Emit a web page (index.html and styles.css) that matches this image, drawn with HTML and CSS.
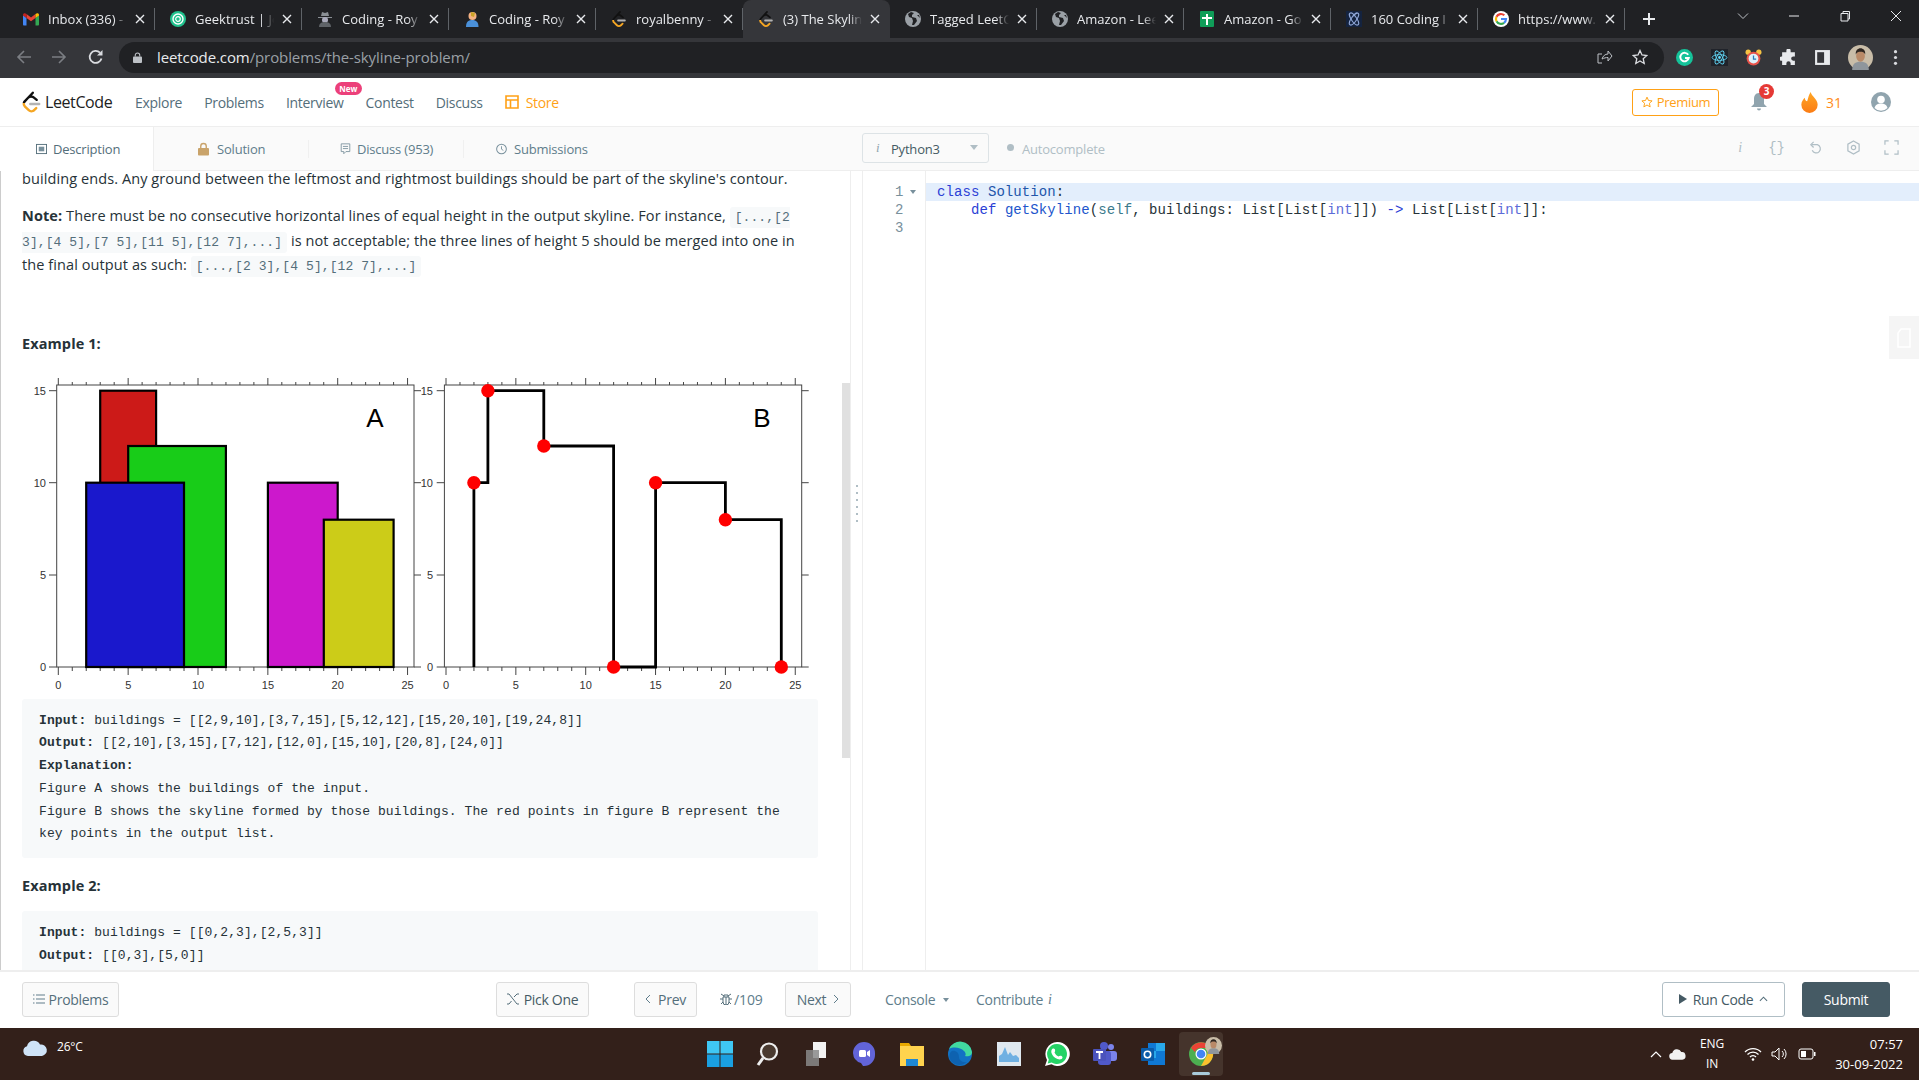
FILE: index.html
```html
<!DOCTYPE html>
<html lang="en">
<head>
  <meta charset="UTF-8">
  <title>The Skyline Problem - LeetCode</title>
  <link rel="stylesheet" href="styles.css">
</head>
<body>
  <svg class="defs">
    <defs>
      <linearGradient id="lcfill" x1="0" y1="0" x2="0" y2="1">
        <stop offset="0.56" stop-color="#111"/>
        <stop offset="0.56" stop-color="#f5a623"/>
      </linearGradient>
      <linearGradient id="flame" x1="0" y1="0" x2="0" y2="1">
        <stop offset="0" stop-color="#ffa726"/>
        <stop offset="1" stop-color="#fb7c14"/>
      </linearGradient>
    </defs>
    <symbol id="lc" viewBox="0 0 24 24">
      <path fill="url(#lcfill)" d="M13.483 0a1.374 1.374 0 0 0-.961.438L7.116 6.226l-3.854 4.126a5.266 5.266 0 0 0-1.209 2.104 5.35 5.35 0 0 0-.125.513 5.527 5.527 0 0 0 .062 2.362 5.83 5.83 0 0 0 .349 1.017 5.938 5.938 0 0 0 1.271 1.818l4.277 4.193.039.038c2.248 2.165 5.852 2.133 8.063-.074l2.396-2.392c.54-.54.54-1.414.003-1.955a1.378 1.378 0 0 0-1.951-.003l-2.396 2.392a3.021 3.021 0 0 1-4.205.038l-.02-.019-4.276-4.193c-.652-.64-.972-1.469-.948-2.263a2.68 2.68 0 0 1 .066-.523 2.545 2.545 0 0 1 .619-1.164L9.13 8.114c1.058-1.134 3.204-1.27 4.43-.278l3.501 2.831c.593.48 1.461.387 1.94-.207a1.384 1.384 0 0 0-.207-1.943l-3.5-2.831c-.8-.647-1.766-1.045-2.774-1.202l2.015-2.158A1.384 1.384 0 0 0 13.483 0z"/>
      <path fill="#b3b3b3" d="M10.617 12.815a1.38 1.38 0 0 0 0 2.764H20.79a1.38 1.38 0 0 0 0-2.764z"/>
    </symbol>
    <symbol id="globe" viewBox="0 0 16 16">
      <circle cx="8" cy="8" r="8" fill="#9aa0a6"/>
      <path fill="#202124" d="M6 1 3 3l1 3 3 1 1 3-1 4h2l3-4-1-3-4-1V4l2-2zM12 4l2 2 1 1-1-3z"/>
    </symbol>
    <symbol id="close" viewBox="0 0 10 10">
      <path d="M1 1l8 8M9 1l-8 8" stroke="#e8eaed" stroke-width="1.4" fill="none"/>
    </symbol>
  </svg>

  <div class="tabstrip">
    <div class="tab">
      <svg class="fav" viewBox="0 0 16 16"><path fill="#4285f4" d="M0 4v9.5c0 .5.4 1 1 1h2.500V7z"/><path fill="#34a853" d="M16 4v9.500c0 .5-.4 1-1 1h-2.500V7z"/><path fill="#ea4335" d="M3.500 7 8 10.300 12.500 7V3L8 6.400 3.500 3z"/><path fill="#c5221f" d="M0 4c0-2 2-2.500 3.500-1v4L0 4.500z"/><path fill="#fbbc04" d="M16 4c0-2-2-2.500-3.500-1v4L16 4.500z"/></svg>
      <span class="tab-title">Inbox (336) - </span><svg class="x"><use href="#close"/></svg>
    </div>
    <div class="tab">
      <svg class="fav" viewBox="0 0 16 16"><circle cx="8" cy="8" r="8" fill="#1fc08c"/><circle cx="8" cy="8" r="5" fill="none" stroke="#fff" stroke-width="1.400"/><circle cx="8" cy="8" r="2.300" fill="none" stroke="#fff" stroke-width="1.200"/></svg>
      <span class="tab-title">Geektrust | Jo</span><svg class="x"><use href="#close"/></svg>
    </div>
    <div class="tab">
      <svg class="fav" viewBox="0 0 16 16"><path fill="#8a8f94" d="M4 5l1-4 3 1 3-1 1 4zM1 6h14v1H1z"/><circle cx="8" cy="9" r="3" fill="#aab"/><path fill="#5f6368" d="M2 16c0-4 3-5 6-5s6 1 6 5z"/></svg>
      <span class="tab-title">Coding - Roy</span><svg class="x"><use href="#close"/></svg>
    </div>
    <div class="tab">
      <svg class="fav" viewBox="0 0 16 16"><circle cx="8.500" cy="5" r="4" fill="#f4b183"/><path fill="#4a90d9" d="M2 16c0-6 3-7 6.500-7s6 2 6 7z"/><path fill="#c9a227" d="M7 1l4 1-1 4-3-1z"/></svg>
      <span class="tab-title">Coding - Roy</span><svg class="x"><use href="#close"/></svg>
    </div>
    <div class="tab">
      <svg class="fav"><use href="#lc"/></svg>
      <span class="tab-title">royalbenny - </span><svg class="x"><use href="#close"/></svg>
    </div>
    <div class="tab active">
      <svg class="fav"><use href="#lc"/></svg>
      <span class="tab-title">(3) The Skylin</span><svg class="x"><use href="#close"/></svg>
    </div>
    <div class="tab">
      <svg class="fav"><use href="#globe"/></svg>
      <span class="tab-title">Tagged LeetC</span><svg class="x"><use href="#close"/></svg>
    </div>
    <div class="tab">
      <svg class="fav"><use href="#globe"/></svg>
      <span class="tab-title">Amazon - Lee</span><svg class="x"><use href="#close"/></svg>
    </div>
    <div class="tab">
      <svg class="fav" viewBox="0 0 16 16"><rect x="1" width="14" height="16" rx="1" fill="#0f9d58"/><path fill="#fff" d="M7 3h2v3h4v2H9v6H7V8H3V6h4z"/></svg>
      <span class="tab-title">Amazon - Go</span><svg class="x"><use href="#close"/></svg>
    </div>
    <div class="tab">
      <svg class="fav" viewBox="0 0 16 16"><rect width="16" height="16" fill="#14233f"/><g fill="none" stroke="#8fa6d6" stroke-width="1.200"><ellipse cx="8" cy="8" rx="2.600" ry="7" transform="rotate(35 8 8)"/><ellipse cx="8" cy="8" rx="2.600" ry="7" transform="rotate(-35 8 8)"/></g></svg>
      <span class="tab-title">160 Coding I</span><svg class="x"><use href="#close"/></svg>
    </div>
    <div class="tab">
      <svg class="fav" viewBox="0 0 16 16"><circle cx="8" cy="8" r="8" fill="#fff"/><path fill="none" stroke="#4285f4" stroke-width="2.200" d="M8 8h5a5 5 0 0 1-2 3.800"/><path fill="none" stroke="#34a853" stroke-width="2.200" d="M11 11.800A5 5 0 0 1 3.500 10.300"/><path fill="none" stroke="#fbbc04" stroke-width="2.200" d="M3.500 10.300a5 5 0 0 1 0-4.600"/><path fill="none" stroke="#ea4335" stroke-width="2.200" d="M3.500 5.700A5 5 0 0 1 11.300 4.300"/></svg>
      <span class="tab-title">https://www.</span><svg class="x"><use href="#close"/></svg>
    </div>
    <svg class="newtab" viewBox="0 0 14 14"><path d="M7 1v12M1 7h12" stroke="#e8eaed" stroke-width="2" fill="none"/></svg>
    <div class="win-btns">
      <svg viewBox="0 0 12 12"><path d="M1 3.500l5 5 5-5" stroke="#bdc1c6" fill="none"/></svg>
      <svg viewBox="0 0 12 12"><path d="M1 6h10" stroke="#e8eaed" fill="none"/></svg>
      <svg viewBox="0 0 12 12"><path d="M2 3.500h7v7.500H2zM4 3.500V1.500h6.500V9H9" stroke="#e8eaed" fill="none"/></svg>
      <svg viewBox="0 0 12 12"><path d="M1 1l10 10M11 1L1 11" stroke="#e8eaed" fill="none"/></svg>
    </div>
  </div>

  <div class="toolbar">
    <svg class="nav-ico" viewBox="0 0 16 16"><path d="M15 8H2M8 2 2 8l6 6" stroke="#7b7e83" stroke-width="1.600" fill="none"/></svg>
    <svg class="nav-ico forward" viewBox="0 0 16 16"><path d="M1 8h13M8 2l6 6-6 6" stroke="#7b7e83" stroke-width="1.600" fill="none"/></svg>
    <svg class="nav-ico reload" viewBox="0 0 16 16"><path d="M13.500 9.500A6 6 0 1 1 12 3.700" stroke="#dadce0" stroke-width="1.800" fill="none"/><path d="M14.500 1v5.500H9z" fill="#dadce0"/></svg>
    <div class="omnibox">
      <svg class="lock" viewBox="0 0 10 12"><path d="M2.500 5V3.500a2.500 2.500 0 0 1 5 0V5" stroke="#bdc1c6" stroke-width="1.200" fill="none"/><rect y="5" width="10" height="7" rx="1" fill="#bdc1c6"/></svg>
      <span class="url">leetcode.com<span class="url-path">/problems/the-skyline-problem/</span></span>
      <svg class="omni-ico share" viewBox="0 0 16 16"><path d="M5 14H1V5h4M5 10c1-3 3-5 6-5V2l4 5-4 5V8.500c-2 0-4 .5-6 1.500z" stroke="#bdc1c6" fill="none"/></svg>
      <svg class="omni-ico" viewBox="0 0 16 16"><path d="M8 1.500l2 4.500 4.800.5-3.600 3.200 1 4.800L8 12l-4.200 2.500 1-4.800L1.200 6.500 6 6z" stroke="#dadce0" stroke-width="1.300" fill="none"/></svg>
    </div>
    <div class="ext-row">
      <svg viewBox="0 0 16 16"><circle cx="8" cy="8" r="8" fill="#15c39a"/><path d="M11.500 5.500a4 4 0 1 0 .5 3H8.500" stroke="#fff" stroke-width="1.800" fill="none"/></svg>
      <svg viewBox="0 0 16 16"><rect width="16" height="16" fill="#20232a"/><g fill="none" stroke="#61dafb" stroke-width=".8"><ellipse cx="8" cy="8" rx="7" ry="2.700"/><ellipse cx="8" cy="8" rx="7" ry="2.700" transform="rotate(60 8 8)"/><ellipse cx="8" cy="8" rx="7" ry="2.700" transform="rotate(120 8 8)"/></g><circle cx="8" cy="8" r="1.300" fill="#61dafb"/></svg>
      <svg viewBox="0 0 16 16"><circle cx="3" cy="3" r="2.500" fill="#f6c343"/><circle cx="13" cy="3" r="2.500" fill="#f6c343"/><circle cx="8" cy="9" r="6.500" fill="#e8534a"/><circle cx="8" cy="9" r="4.600" fill="#dff3fb"/><path d="M8 6v3.500h2.500" stroke="#2a78b8" stroke-width="1.200" fill="none"/></svg>
      <svg viewBox="0 0 16 16"><path fill="#e8eaed" d="M6 1.500a2 2 0 0 1 4 0V3h4v4h-1.500a2 2 0 0 0 0 4H14v4H10v-1.500a2 2 0 0 0-4 0V15H2v-4h-.5a2 2 0 0 1 0-4H2V3h4z"/></svg>
      <svg viewBox="0 0 16 16"><rect x="1" y="1" width="14" height="14" fill="#e8eaed"/><rect x="3" y="3" width="6.500" height="10" fill="#35363a"/></svg>
      <svg class="profile" viewBox="0 0 24 24"><circle cx="12" cy="12" r="12" fill="#c9bda8"/><path fill="#8f969c" d="M4 24c0-6 3-8 8-8s8 2 8 8z"/><ellipse cx="12" cy="10.500" rx="4.200" ry="5.500" fill="#b98a68"/><path fill="#2e2620" d="M7.500 9c-.5-4 2-6 4.500-6s5 2 4.500 6c-1-2-2.500-2.500-4.500-2.500S8.500 7 7.500 9z"/></svg>
      <svg class="menu-dots" viewBox="0 0 16 16"><circle cx="8" cy="2.500" r="1.500" fill="#dadce0"/><circle cx="8" cy="8" r="1.500" fill="#dadce0"/><circle cx="8" cy="13.500" r="1.500" fill="#dadce0"/></svg>
    </div>
  </div>

  <header class="lc-header">
    <div class="brand">
      <svg class="brand-logo"><use href="#lc"/></svg>
      <span class="brand-name">LeetCode</span>
    </div>
    <nav class="main-nav">
      <a>Explore</a>
      <a>Problems</a>
      <a class="has-new">Interview<span class="new-badge">New</span></a>
      <a>Contest</a>
      <a>Discuss</a>
      <a class="store">
        <svg viewBox="0 0 14 14"><path d="M1 1h12v12H1zM1 5h12M5.500 5v8" stroke="#ffa116" stroke-width="1.600" fill="none"/></svg>Store
      </a>
    </nav>
    <div class="header-right">
      <span class="premium"><svg viewBox="0 0 16 16"><path d="M8 1.500l2 4.500 4.800.5-3.600 3.200 1 4.800L8 12l-4.200 2.500 1-4.800L1.200 6.500 6 6z" stroke="#ffa116" stroke-width="1.300" fill="none"/></svg>Premium</span>
      <span class="bell">
        <svg viewBox="0 0 18 20"><path fill="#90a4ae" d="M9 1c-3.500 0-5 3-5 6v5l-3 3h16l-3-3V7c0-3-1.500-6-5-6zM7 16.500a2 2 0 0 0 4 0z"/></svg>
        <span class="bell-count">3</span>
      </span>
      <span class="streak"><svg viewBox="0 0 14 18"><path fill="url(#flame)" d="M8 0c1 4 6 6 6 11a7 7 0 0 1-14 0c0-3 2-5 3-6 0 2 1 3 2 3 1-3 1-5 3-8z"/></svg>31</span>
      <svg class="avatar" viewBox="0 0 20 20"><circle cx="10" cy="10" r="10" fill="#90a4ae"/><circle cx="10" cy="7.500" r="3.800" fill="#fff"/><path fill="#fff" d="M3.500 16c1-3.500 3.500-4.500 6.500-4.500s5.500 1 6.500 4.500a9 9 0 0 1-13 0z"/></svg>
    </div>
  </header>

  <div class="tabs-bar">
    <div class="left-tabs">
      <a class="side-tab current"><svg viewBox="0 0 12 12"><rect x=".5" y="1" width="11" height="10" fill="none" stroke="#546e7a"/><rect x="3" y="3.500" width="6" height="5" fill="#78909c"/></svg>Description</a>
      <a class="side-tab solution"><svg class="lock-ico" viewBox="0 0 12 14"><path d="M3 6V4a3 3 0 0 1 6 0v2" stroke="#c9a36a" stroke-width="1.500" fill="none"/><rect y="6" width="12" height="8" rx="1" fill="#c9a36a"/></svg>Solution</a>
      <a class="side-tab discuss"><svg viewBox="0 0 12 14"><path d="M1 1h10v9H6.500L4 12.500V10H1zM3 4h6M3 6.500h6" stroke="#78909c" fill="none"/></svg>Discuss (953)</a>
      <a class="side-tab submissions"><svg viewBox="0 0 12 12"><circle cx="6" cy="6" r="5.300" fill="none" stroke="#78909c" stroke-width="1.100"/><path d="M6 3v3.200l2 1.300" fill="none" stroke="#78909c"/></svg>Submissions</a>
    </div>
    <div class="editor-bar">
      <div class="lang-select"><span class="lang-i">i</span><span class="lang-name">Python3</span><span class="caret"></span></div>
      <span class="auto-dot"></span><span class="auto-label">Autocomplete</span>
      <div class="editor-tools">
        <span class="tool-i">i</span>
        <span class="tool-braces">{}</span>
        <svg viewBox="0 0 16 16"><path d="M4 5h6a4.500 4.500 0 1 1-5.500 6" stroke="#b0bec5" stroke-width="1.300" fill="none"/><path d="M6 2 3 5l3 3" stroke="#b0bec5" stroke-width="1.300" fill="none"/></svg>
        <svg viewBox="0 0 16 16"><path d="M8 1l6 3.500v7L8 15l-6-3.500v-7z" stroke="#b0bec5" stroke-width="1.300" fill="none"/><circle cx="8" cy="8" r="2.300" stroke="#b0bec5" stroke-width="1.300" fill="none"/></svg>
        <svg viewBox="0 0 16 16"><path d="M1 5V1h4M11 1h4v4M15 11v4h-4M5 15H1v-4" stroke="#b0bec5" stroke-width="1.300" fill="none"/></svg>
      </div>
    </div>
  </div>

  <main class="workspace">
    <section class="left-pane">
      <div class="desc">
        <p class="para lead">building ends. Any ground between the leftmost and rightmost buildings should be part of the skyline's contour.</p>
        <p class="para note"><strong>Note:</strong> There must be no consecutive horizontal lines of equal height in the output skyline. For instance, <code>[...,[2 3],[4 5],[7 5],[11 5],[12 7],...]</code> is not acceptable; the three lines of height 5 should be merged into one in the final output as such: <code>[...,[2 3],[4 5],[12 7],...]</code></p>
        <p class="para example-title first"><strong>Example 1:</strong></p>
        <svg class="figure" viewBox="22 370 800 329" width="800" height="329">
          <defs>
            <g id="axes" fill="none" stroke="#444">
              <rect x="56.700" y="385" width="357.300" height="282"/>
              <path d="M58.300 667v8m13.970-8v4m13.970-4v4m13.970-4v4m13.970-4v4m13.970-4v8m13.970-8v4m13.970-4v4m13.970-4v4m13.970-4v4m13.970-4v8m13.970-8v4m13.970-4v4m13.970-4v4m13.970-4v4m13.970-4v8m13.970-8v4m13.970-4v4m13.970-4v4m13.970-4v4m13.970-4v8m13.970-8v4m13.970-4v4m13.970-4v4m13.970-4v4m13.970-4v8"/>
              <path d="M58.300 385v-7m13.970 7v-3m13.970 3v-3m13.970 3v-3m13.970 3v-3m13.970 3v-7m13.970 7v-3m13.970 3v-3m13.970 3v-3m13.970 3v-3m13.970 3v-7m13.970 7v-3m13.970 3v-3m13.970 3v-3m13.970 3v-3m13.970 3v-7m13.970 7v-3m13.970 3v-3m13.970 3v-3m13.970 3v-3m13.970 3v-7m13.970 7v-3m13.970 3v-3m13.970 3v-3m13.970 3v-3m13.970 3v-7"/>
              <path d="M49 390.700h7.700M49 482.700h7.700M49 575h7.700M49 667h7.700M414 390.700h7M414 482.700h7M414 575h7M414 667h7"/>
            </g>
          </defs>
          <use href="#axes"/>
          <use href="#axes" x="387.700"/>
          <g class="tick-text x-ticks">
            <text x="58.300" y="689">0</text><text x="128.200" y="689">5</text><text x="198" y="689">10</text><text x="267.900" y="689">15</text><text x="337.700" y="689">20</text><text x="407.600" y="689">25</text>
            <text x="446" y="689">0</text><text x="515.900" y="689">5</text><text x="585.700" y="689">10</text><text x="655.600" y="689">15</text><text x="725.400" y="689">20</text><text x="795.300" y="689">25</text>
          </g>
          <g class="tick-text y-ticks">
            <text x="46" y="394.700">15</text><text x="46" y="486.700">10</text><text x="46" y="579">5</text><text x="46" y="671">0</text>
            <text x="433" y="394.700">15</text><text x="433" y="486.700">10</text><text x="433" y="579">5</text><text x="433" y="671">0</text>
          </g>
          <g stroke="#000" stroke-width="2.200">
            <rect x="100.200" y="390.700" width="55.900" height="276.300" fill="#cc1a18"/>
            <rect x="128.200" y="446" width="97.700" height="221" fill="#18cc18"/>
            <rect x="86.200" y="482.700" width="97.800" height="184.300" fill="#1a18cc"/>
            <rect x="267.900" y="482.700" width="69.800" height="184.300" fill="#cc18cc"/>
            <rect x="323.800" y="519.700" width="69.800" height="147.300" fill="#cccc18"/>
          </g>
          <path d="M473.900 667V482.700H487.900V390.700H543.800V446H613.600V667H655.600V482.700H725.400V519.700H781.300V667" fill="none" stroke="#000" stroke-width="2.800"/>
          <g fill="#f00">
            <circle cx="473.900" cy="482.700" r="6.700"/><circle cx="487.900" cy="390.700" r="6.700"/><circle cx="543.800" cy="446" r="6.700"/><circle cx="613.600" cy="667" r="6.700"/><circle cx="655.600" cy="482.700" r="6.700"/><circle cx="725.400" cy="519.700" r="6.700"/><circle cx="781.300" cy="667" r="6.700"/>
          </g>
          <text class="panel-letter" x="375" y="427">A</text>
          <text class="panel-letter" x="762" y="427">B</text>
        </svg>
        <pre class="sample"><strong>Input:</strong> buildings = [[2,9,10],[3,7,15],[5,12,12],[15,20,10],[19,24,8]]
<strong>Output:</strong> [[2,10],[3,15],[7,12],[12,0],[15,10],[20,8],[24,0]]
<strong>Explanation:</strong>
Figure A shows the buildings of the input.
Figure B shows the skyline formed by those buildings. The red points in figure B represent the
key points in the output list.</pre>
        <p class="para example-title"><strong>Example 2:</strong></p>
        <pre class="sample"><strong>Input:</strong> buildings = [[0,2,3],[2,5,3]]
<strong>Output:</strong> [[0,3],[5,0]]</pre>
      </div>
      <div class="scrollbar"></div>
    </section>
    <div class="splitter"><span></span><span></span><span></span><span></span><span></span><span></span></div>
    <section class="editor">
      <div class="gutter">
        <div class="ln">1<span class="fold"></span></div>
        <div class="ln">2</div>
        <div class="ln">3</div>
      </div>
      <div class="code">
        <div class="code-line current-line"><span class="kw">class</span> <span class="cls">Solution</span>:</div>
        <div class="code-line">    <span class="kw">def</span> <span class="fn">getSkyline</span>(<span class="self">self</span>, buildings: List[List[<span class="bi">int</span>]]) <span class="kw">-&gt;</span> List[List[<span class="bi">int</span>]]:</div>
        <div class="code-line"></div>
      </div>
      <div class="side-handle"><svg viewBox="0 0 14 20"><path d="M4 1h9v18H1V5z" fill="none" stroke="#fff" stroke-width="1.500"/></svg></div>
    </section>
  </main>

  <footer class="action-bar">
    <button class="btn problems"><svg viewBox="0 0 12 12"><path d="M3 2h9M3 6h9M3 10h9M0 2h1.500M0 6h1.500M0 10h1.500" stroke="#607d8b" fill="none"/></svg>Problems</button>
    <button class="btn pick"><svg viewBox="0 0 12 12"><path d="M0 1h2l8 10h2M0 11h2l2.500-3M7 4l3-3h2" stroke="#546e7a" fill="none"/></svg>Pick One</button>
    <button class="btn prev"><svg viewBox="0 0 6 10"><path d="M5 1 1 5l4 4" stroke="#607d8b" fill="none"/></svg>Prev</button>
    <span class="pager"><svg viewBox="0 0 12 12"><path d="M3 4h6v5a3 3 0 0 1-6 0zM4 4V2h4v2M0 6h3M9 6h3M1 11l2-2M11 11 9 9M1 1l3 2M11 1 8 3M6 4v8" stroke="#546e7a" fill="none"/></svg>/109</span>
    <button class="btn next">Next<svg viewBox="0 0 6 10"><path d="M1 1l4 4-4 4" stroke="#607d8b" fill="none"/></svg></button>
    <a class="link console">Console<span class="mini-caret"></span></a>
    <a class="link contribute">Contribute <em>i</em></a>
    <button class="btn run"><span class="play"></span>Run Code<svg viewBox="0 0 10 6"><path d="M1 5l4-4 4 4" stroke="#546e7a" stroke-width="1.200" fill="none"/></svg></button>
    <button class="btn submit">Submit</button>
  </footer>

  <div class="taskbar">
    <div class="weather">
      <svg viewBox="0 0 26 20"><path fill="#cfe3f7" d="M6 19a5 5 0 0 1-1-9.800A7 7 0 0 1 18 7.500 5.500 5.500 0 0 1 20 19z"/></svg>
      <span>26°C</span>
    </div>
    <div class="task-icons">
      <svg viewBox="0 0 26 26"><path fill="#3fc7f4" d="M0 0h12.500v12.500H0z"/><path fill="#3fc7f4" d="M13.500 0H26v12.500H13.500z"/><path fill="#1a9fe0" d="M0 13.500h12.500V26H0zM13.500 13.500H26V26H13.500z"/></svg>
      <svg viewBox="0 0 26 26"><circle cx="14" cy="10.500" r="8" fill="#4a3a30" stroke="#eee" stroke-width="2.200"/><path d="M8 17l-5 7" stroke="#eee" stroke-width="3"/></svg>
      <svg viewBox="0 0 26 26"><rect x="10" y="1" width="13" height="16" fill="#f2f2f2"/><rect x="3" y="9" width="13" height="16" fill="#8a8a8a" opacity=".85"/></svg>
      <svg viewBox="0 0 26 26"><path fill="#6264d8" d="M13 1a11 11 0 0 1 11 11v2a11 11 0 0 1-11 11h-1l-2-3A11 11 0 0 1 2 12 11 11 0 0 1 13 1z"/><rect x="8" y="9" width="7" height="7" rx="1.500" fill="#fff"/><path fill="#fff" d="M16 11l3-2v7l-3-2z"/></svg>
      <svg viewBox="0 0 26 26"><path fill="#e8a800" d="M1 2h9l2 3h-11z"/><path fill="#ffd34e" d="M1 5h24v20H1z"/><path fill="#1e88d4" d="M7 18h12v7H7z"/></svg>
      <svg viewBox="0 0 26 26"><circle cx="13" cy="13" r="12" fill="#1272c4"/><path fill="#41d9a0" d="M2 8a12 12 0 0 1 23 3c0 4-4 5-7 4 1-1 1-3-1-5-3-3-10-5-15-2z"/><path fill="#0c59a4" d="M4 20c-3-5-1-9 1-10 3-1 7 1 7 6 0 3 3 6 8 5-3 3-11 5-16-1z" opacity=".6"/></svg>
      <svg viewBox="0 0 26 26"><rect x="1" y="1" width="24" height="24" fill="#dfe8ef"/><path fill="#6fb0e2" d="M3 21V15l3-2 3-7 3 8 2-3 3 4 3-1 3 3v4z"/></svg>
      <svg viewBox="0 0 26 26"><path fill="#fff" d="M13 1a12 12 0 0 0-10 18L1 25l6.500-1.800A12 12 0 1 0 13 1z"/><path fill="#25d366" d="M13 3a10 10 0 0 0-8.200 15.500L3.700 22.500l4-1A10 10 0 1 0 13 3z"/><path fill="#fff" d="M9.500 7.500c2 0 2 3 1 4 1 2 2 3 4 4 1-1 4-1 4 1 0 2-3 2.500-5 1.500-3-1-5-3-6-6-.5-2 0-4.500 2-4.500z"/></svg>
      <svg viewBox="0 0 26 26"><circle cx="19" cy="6" r="3" fill="#7b83eb"/><rect x="15" y="10" width="10" height="10" rx="3" fill="#7b83eb"/><circle cx="12" cy="5" r="4" fill="#5059c9"/><rect x="6" y="10" width="13" height="14" rx="3" fill="#5059c9"/><rect x="1" y="8" width="13" height="12" rx="1" fill="#4b53bc"/><path d="M4 11h7M7.500 11v7" stroke="#fff" stroke-width="1.800"/></svg>
      <svg viewBox="0 0 26 26"><path fill="#0f78d4" d="M8 2h17v22H8z"/><path fill="#28a8ea" d="M16 2h9v8h-9zM8 10h8v7H8z"/><rect x="1" y="7" width="13" height="13" rx="1" fill="#0a5ba8"/><circle cx="7.500" cy="13.500" r="3.200" fill="none" stroke="#fff" stroke-width="1.600"/></svg>
      <div class="chrome-slot">
        <svg viewBox="0 0 26 26"><circle cx="13" cy="13" r="12" fill="#4caf50"/><path fill="#ea4335" d="M3 7a12 12 0 0 1 20.500 0H13a6 6 0 0 0-6 4z"/><path fill="#fbc02d" d="M23.500 7A12 12 0 0 1 13 25l5-9a6 6 0 0 0-1-9z"/><circle cx="13" cy="13" r="5.500" fill="#fff"/><circle cx="13" cy="13" r="4.300" fill="#4285f4"/></svg>
        <svg class="chrome-badge" viewBox="0 0 24 24"><circle cx="12" cy="12" r="12" fill="#c9bda8"/><path fill="#8f969c" d="M4 24c0-6 3-8 8-8s8 2 8 8z"/><ellipse cx="12" cy="10.500" rx="4.200" ry="5.500" fill="#b98a68"/><path fill="#2e2620" d="M7.500 9c-.5-4 2-6 4.500-6s5 2 4.500 6c-1-2-2.500-2.500-4.500-2.500S8.500 7 7.500 9z"/></svg>
        <span class="chrome-running"></span>
      </div>
    </div>
    <div class="tray">
      <svg class="tray-chev" viewBox="0 0 12 8"><path d="M1 7l5-5 5 5" stroke="#fff" stroke-width="1.200" fill="none"/></svg>
      <svg class="tray-cloud" viewBox="0 0 18 12"><path fill="#f2f2f2" d="M4 12a3.500 3.500 0 0 1-.5-7A5 5 0 0 1 13 4a4 4 0 0 1 1 8z"/></svg>
      <div class="lang"><span>ENG</span><span>IN</span></div>
      <svg class="tray-ico" viewBox="0 0 18 14"><path d="M1 5a11 11 0 0 1 16 0M3.500 7.500a7.500 7.500 0 0 1 11 0M6 10a4 4 0 0 1 6 0" stroke="#fff" stroke-width="1.300" fill="none"/><circle cx="9" cy="12.500" r="1.300" fill="#fff"/></svg>
      <svg class="tray-ico" viewBox="0 0 18 14"><path d="M1 5h3l4-4v12l-4-4H1z" stroke="#fff" fill="none"/><path d="M11 4a4 4 0 0 1 0 6M13 2a7 7 0 0 1 0 10" stroke="#fff" fill="none"/></svg>
      <svg class="tray-ico" viewBox="0 0 18 14"><rect x="1" y="2" width="14" height="10" rx="2" stroke="#fff" fill="none"/><rect x="3" y="4" width="5" height="6" fill="#fff"/><rect x="16" y="5" width="1.500" height="4" fill="#fff"/></svg>
      <div class="clock"><span>07:57</span><span>30-09-2022</span></div>
    </div>
  </div>
</body>
</html>
```

FILE: styles.css
```css
* { box-sizing: border-box; }
html, body { margin: 0; height: 100%; }
body {
  font-family: "Open Sans", "Noto Sans", sans-serif;
  font-size: 14px;
  color: #263238;
  background: #fff;
  width: 1919px;
  height: 1080px;
  overflow: hidden;
  display: flex;
  flex-direction: column;
}
.defs { width: 0; height: 0; position: absolute; }

/* browser chrome */
.tabstrip { height: 38px; background: #202124; display: flex; align-items: center; padding-left: 8px; flex: none; }
.tab {
  width: 147px;
  height: 38px;
  padding: 0 10px 0 15px;
  display: flex;
  align-items: center;
  color: #e8eaed;
  font-size: 13px;
  position: relative;
  flex: none;
}
.tab::after { content: ""; position: absolute; right: 0; top: 8px; height: 22px; border-right: 1px solid #5f6368; }
.tab.active { background: #35363a; border-radius: 8px 8px 0 0; }
.tab.active::after { display: none; }
.fav { width: 16px; height: 16px; flex: none; margin-right: 9px; }
.tab-title {
  width: 82px;
  overflow: hidden;
  white-space: nowrap;
  flex: none;
  -webkit-mask-image: linear-gradient(to right, #000 66px, transparent 79px);
  mask-image: linear-gradient(to right, #000 66px, transparent 79px);
}
.x { width: 10px; height: 10px; margin-left: 5px; flex: none; }
.newtab { width: 14px; height: 14px; margin-left: 17px; flex: none; }
.win-btns { margin-left: auto; display: flex; align-items: center; gap: 39px; padding-right: 17px; margin-top: -6px; }
.win-btns svg { width: 12px; height: 12px; }

.toolbar { height: 40px; background: #35363a; display: flex; align-items: center; padding: 0 0 2px 16px; flex: none; }
.nav-ico { width: 16px; height: 16px; margin-right: 19px; flex: none; }
.nav-ico.forward { margin-right: 21px; }
.nav-ico.reload { margin-right: 15px; }
.omnibox {
  width: 1545px;
  height: 31px;
  background: #202124;
  border-radius: 16px;
  display: flex;
  align-items: center;
  padding: 0 16px 0 14px;
  flex: none;
}
.lock { width: 9px; height: 11px; margin-right: 15px; }
.url { color: #e8eaed; font-size: 15px; letter-spacing: -0.1px; }
.url-path { color: #9aa0a6; }
.omni-ico { width: 16px; height: 16px; margin-left: 19px; }
.share { margin-left: auto; }
.ext-row { display: flex; align-items: center; gap: 17.600px; padding-left: 12px; }
.ext-row svg { width: 17px; height: 17px; flex: none; }
.ext-row .profile { width: 25px; height: 25px; margin: 0 -1px; }
.ext-row .menu-dots { margin-left: -3px; }

/* leetcode header */
.lc-header { height: 49px; background: #fff; border-bottom: 1px solid #eee; display: flex; align-items: center; padding-left: 21px; flex: none; font-size: 14px; }
.brand { display: flex; align-items: center; width: 114px; flex: none; }
.brand-logo { width: 21px; height: 24px; flex: none; }
.brand-name { font-size: 16px; color: #212121; letter-spacing: -0.4px; margin-left: 3px; }
.main-nav { display: flex; align-items: center; color: #546e7a; }
.main-nav a { margin-right: 22px; position: relative; letter-spacing: -0.3px; }
.new-badge {
  position: absolute;
  left: 49px;
  top: -11px;
  width: 27px;
  height: 13px;
  border-radius: 7px;
  background: #ec407a;
  color: #fff;
  font-size: 8px;
  font-weight: 700;
  line-height: 13px;
  text-align: center;
  letter-spacing: 0;
}
.store { color: #ffa116; display: flex; align-items: center; }
.store svg { width: 14px; height: 14px; margin-right: 7px; }
.header-right { margin-left: auto; display: flex; align-items: center; padding-right: 28px; }
.premium {
  width: 87px;
  height: 27px;
  border: 1px solid #ffa116;
  border-radius: 3px;
  color: #ffa116;
  font-size: 13px;
  letter-spacing: -0.3px;
  display: flex;
  align-items: center;
  justify-content: center;
}
.premium svg { width: 12px; height: 12px; margin-right: 4px; }
.bell { position: relative; width: 18px; height: 20px; margin-left: 31px; }
.bell svg { width: 18px; height: 20px; display: block; }
.bell-count {
  position: absolute;
  left: 9px;
  top: -8px;
  width: 15px;
  height: 15px;
  border-radius: 50%;
  background: #e53935;
  color: #fff;
  font-size: 10px;
  font-weight: 700;
  line-height: 15px;
  text-align: center;
}
.streak { display: flex; align-items: center; color: #ff8c1a; font-size: 14px; margin-left: 33px; }
.streak svg { width: 17px; height: 21px; margin-right: 8px; }
.avatar { width: 20px; height: 20px; margin-left: 29px; }

/* tabs row */
.tabs-bar { height: 44px; background: #fafafa; border-bottom: 1px solid #eee; display: flex; flex: none; font-size: 13px; color: #607d8b; }
.left-tabs { width: 862px; display: flex; align-items: center; flex: none; letter-spacing: -0.2px; }
.side-tab { display: flex; align-items: center; height: 100%; position: relative; }
.side-tab svg { width: 11px; height: 12px; margin-right: 6px; flex: none; }
.side-tab.current { width: 154px; background: #fff; padding-left: 36px; margin-bottom: -1px; height: 44px; border-right: 1px solid #eee; color: #546e7a; }
.side-tab.solution { width: 155px; padding-left: 44px; }
.side-tab.solution svg { margin-right: 8px; }
.side-tab.solution::after, .side-tab.discuss::after { content: ""; position: absolute; right: 0; top: 13px; height: 18px; border-right: 1px solid #f0f0f0; }
.side-tab.discuss { width: 155px; padding-left: 31px; }
.side-tab.submissions { padding-left: 32px; }
.side-tab.submissions svg { margin-right: 7px; }
.side-tab .lock-ico { height: 14px; }
.editor-bar { flex: 1; display: flex; align-items: center; padding-bottom: 2px; }
.lang-select {
  width: 127px;
  height: 30px;
  background: #fafafa;
  border: 1px solid #dde3e6;
  border-radius: 3px;
  display: flex;
  align-items: center;
  padding-left: 13px;
  color: #455a64;
}
.lang-i { font-family: "Liberation Serif", serif; font-style: italic; color: #90a4ae; width: 15px; }
.lang-name { letter-spacing: -0.2px; padding-top: 2px; }
.caret { border: 4px solid transparent; border-top: 5px solid #b0bec5; margin-left: auto; margin-right: 10px; margin-top: 4px; }
.auto-dot { width: 7px; height: 7px; border-radius: 50%; background: #b0bec5; margin-left: 18px; }
.auto-label { color: #b0bec5; margin-left: 8px; letter-spacing: -0.2px; padding-top: 2px; }
.editor-tools { margin-left: auto; display: flex; align-items: center; color: #b0bec5; padding-right: 20px; }
.editor-tools svg { width: 15px; height: 15px; margin-left: 23px; }
.tool-i { font-family: "Liberation Serif", serif; font-style: italic; font-size: 14px; }
.tool-braces { font-family: "Liberation Mono", monospace; margin-left: 26px; font-size: 14px; }

/* main area */
.workspace { height: 799px; display: flex; flex: none; }
.left-pane { width: 851px; flex: none; position: relative; overflow: hidden; border-left: 1px solid #ccc; border-right: 1px solid #eee; }
.desc { padding-left: 21px; width: 817px; }
.para { margin: 0; line-height: 24px; font-size: 14.500px; letter-spacing: 0.09px; }
.para strong { font-weight: 700; color: #263238; }
.lead { line-height: 16px; }
.note { margin-top: 17px; line-height: 24.500px; }
.note code { background: #f7f9fa; color: #546e7a; font-family: "Liberation Mono", monospace; font-size: 13px; line-height: 16px; letter-spacing: 0.08px; padding: 3px 5px; border-radius: 3px; }
.example-title { margin-top: 16px; }
.example-title.first { margin-top: 54px; }
.figure { display: block; margin-top: 14px; margin-left: -0.5px; }
.tick-text { font-family: "Liberation Sans", sans-serif; font-size: 11px; fill: #333; }
.x-ticks { text-anchor: middle; }
.y-ticks { text-anchor: end; }
.panel-letter { font-family: "Liberation Sans", sans-serif; font-size: 26px; text-anchor: middle; fill: #000; }
.sample {
  margin: 0;
  background: #f7f9fa;
  border-radius: 3px;
  padding: 11px 17px 12px;
  font-family: "Liberation Mono", monospace;
  font-size: 13px;
  letter-spacing: 0.08px;
  line-height: 22.750px;
  color: #263238;
  white-space: pre-wrap;
}
.example-title + .sample { margin-top: 13px; }
.scrollbar { position: absolute; right: 0; top: 212px; width: 8px; height: 375px; background: #e0e0e0; }
.splitter { width: 11px; flex: none; background: #fff; display: flex; flex-direction: column; align-items: center; justify-content: flex-start; gap: 5px; padding-top: 314px; }
.splitter span { width: 2px; height: 2px; background: #b0bec5; flex: none; }

/* editor */
.editor { flex: 1; display: flex; position: relative; border-left: 1px solid #eee; font-family: "Liberation Mono", monospace; font-size: 14px; letter-spacing: 0.08px; }
.gutter { width: 63px; flex: none; border-right: 1px solid #eee; padding-top: 12px; color: #78909c; }
.ln { height: 18px; line-height: 18px; padding-left: 32px; position: relative; }
.fold { position: absolute; left: 47px; top: 7px; border: 3px solid transparent; border-top: 4px solid #78909c; }
.code { flex: 1; padding-top: 12px; }
.code-line { height: 18px; line-height: 18px; padding-left: 11px; white-space: pre; color: #263238; }
.current-line { background: #e3eefc; }
.kw { color: #2b3fd6; }
.cls { color: #2255aa; }
.fn { color: #2255cc; }
.self { color: #3b7a8c; }
.bi { color: #5c6bd8; }
.side-handle { position: absolute; right: 0; top: 145px; width: 30px; height: 43px; background: #f5f5f5; display: flex; align-items: center; justify-content: center; }
.side-handle svg { width: 14px; height: 20px; }

/* bottom bar */
.action-bar { height: 58px; background: #fff; border-top: 2px solid #eee; display: flex; align-items: center; flex: none; position: relative; padding: 0 29px 2px 22px; font-size: 14px; color: #607d8b; }
.btn {
  font-family: inherit;
  font-size: 14px;
  letter-spacing: -0.3px;
  height: 35px;
  background: #fafafa;
  border: 1px solid #ddd;
  border-radius: 3px;
  color: #546e7a;
  display: flex;
  align-items: center;
  justify-content: center;
  padding: 0;
  flex: none;
}
.btn svg { flex: none; }
.problems { width: 97px; }
.problems svg { width: 12px; height: 12px; margin-right: 4px; }
.pick { width: 93px; margin-left: 377px; color: #455a64; }
.pick svg { width: 12px; height: 12px; margin-right: 5px; }
.prev { width: 63px; margin-left: 45px; }
.prev svg, .next svg { width: 6px; height: 10px; }
.prev svg { margin-right: 7px; }
.next svg { margin-left: 7px; }
.pager { width: 88px; display: flex; align-items: center; padding-left: 23px; letter-spacing: -0.1px; }
.pager svg { width: 12px; height: 12px; margin-right: 2px; }
.next { width: 66px; }
.link { letter-spacing: -0.3px; display: flex; align-items: center; padding-top: 1px; }
.console { margin-left: 34px; width: 91px; }
.mini-caret { border: 3px solid transparent; border-top: 4px solid #78909c; margin-left: 8px; margin-top: 4px; }
.contribute em { font-family: "Liberation Serif", serif; margin-left: 5px; }
.run { width: 123px; margin-left: auto; background: #fff; border-color: #b0bec5; color: #455a64; }
.play { border: 5px solid transparent; border-left: 8px solid #455a64; border-right: 0; margin-right: 6px; }
.run svg { width: 9px; height: 6px; margin-left: 6px; }
.submit { width: 88px; margin-left: 17px; background: #455a64; border-color: #455a64; color: #fff; }

/* windows taskbar */
.taskbar { flex: 1; background: #33201a; display: flex; align-items: center; color: #fff; position: relative; }
.weather { display: flex; align-items: center; width: 707px; padding-left: 22px; font-size: 12px; margin-bottom: 15px; flex: none; letter-spacing: -0.2px; }
.weather svg { width: 26px; height: 20px; margin-right: 9px; }
.task-icons { display: flex; align-items: center; gap: 22.100px; }
.task-icons > svg { width: 26px; height: 26px; flex: none; }
.chrome-slot { width: 44px; height: 44px; background: #45342c; border-radius: 4px; position: relative; margin-left: -9px; display: flex; align-items: center; justify-content: center; }
.chrome-slot svg { width: 26px; height: 26px; }
.chrome-slot .chrome-badge { position: absolute; right: 1px; top: 5px; width: 17px; height: 17px; }
.chrome-running { position: absolute; left: 13px; bottom: 1px; width: 18px; height: 3px; border-radius: 2px; background: #a9cbdb; }
.tray { margin-left: auto; display: flex; align-items: center; padding-right: 16px; font-size: 12px; letter-spacing: -0.2px; }
.tray-chev { width: 12px; height: 8px; }
.tray-cloud { width: 17px; height: 12px; margin-left: 6.500px; }
.lang { display: flex; flex-direction: column; align-items: center; width: 40px; margin-left: 6.500px; line-height: 20px; }
.tray-ico { width: 18px; height: 14px; margin-left: 9px; }
.lang + .tray-ico { margin-left: 12px; }
.clock { display: flex; flex-direction: column; align-items: flex-end; width: 80px; margin-left: 7px; line-height: 20px; font-size: 13px; letter-spacing: 0; }
```
